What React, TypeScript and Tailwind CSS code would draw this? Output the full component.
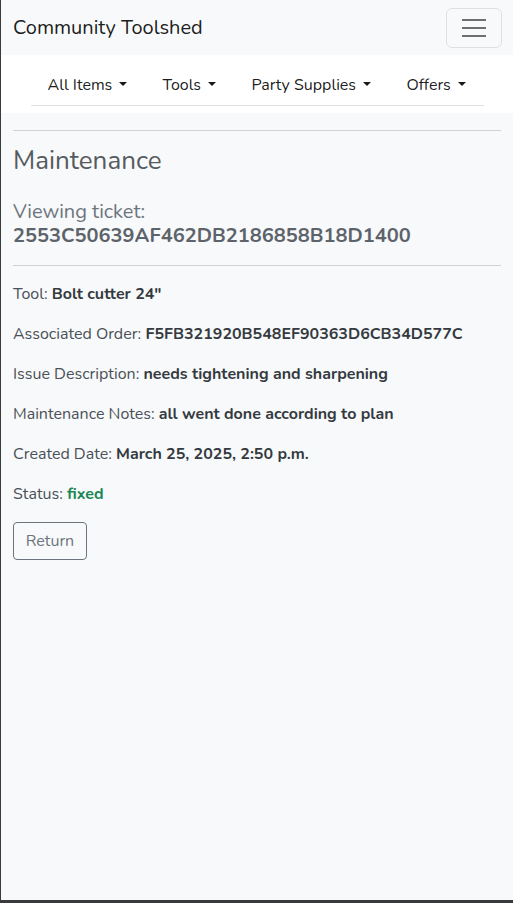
import React from "react";

const Caret = () => (
  <span className="ml-[7px] inline-block align-middle border-x-[4px] border-x-transparent border-t-[4.5px] border-t-black/90 h-0 w-0 relative top-[-2px]" />
);

export default function App() {
  const f = { fontFamily: "Nunito, Lato, 'Noto Sans', sans-serif" };
  return (
    <div className="min-h-[903px] w-[513px] bg-[#3a3a3a] flex flex-col" style={f}>
      <div className="flex-1 ml-[1px] mb-[3px] bg-[#f8f9fa] flex flex-col text-[#212529]">
        <nav className="h-[55px] bg-[#f8f9fa] flex items-center justify-between pl-[12px] pr-[11px]">
          <span className="text-[20px] text-black/90">Community Toolshed</span>
          <button className="w-[56px] h-[40px] border border-black/10 rounded-[6px] flex flex-col items-center justify-center gap-[6px]">
            <span className="block w-[24px] h-[2px] bg-[#6f6f6f]" />
            <span className="block w-[24px] h-[2px] bg-[#6f6f6f]" />
            <span className="block w-[24px] h-[2px] bg-[#6f6f6f]" />
          </button>
        </nav>
        <div className="bg-white h-[58px] flex justify-center">
          <ul className="w-[453px] h-[51px] border-b border-[#dee2e6] flex items-center text-[16px] text-black/90 pl-[17px] pt-[10px]">
            <li className="w-[115px]">All Items<Caret /></li>
            <li className="w-[89px]">Tools<Caret /></li>
            <li className="w-[155px]">Party Supplies<Caret /></li>
            <li>Offers<Caret /></li>
          </ul>
        </div>
        <main className="px-[12px] pt-[17px]">
          <hr className="border-t border-[#cfd1d3]" />
          <h2 className="text-[26px] leading-[31px] text-[#555b61] mt-[14px] mb-[24px]">Maintenance</h2>
          <h4 className="text-[20px] leading-[24px] text-[#6c757d]">
            Viewing ticket:
            <br />
            <b className="font-bold text-[#5c636a]">2553C50639AF462DB2186858B18D1400</b>
          </h4>
          <hr className="border-t border-[#cfd1d3] mt-[17px] mb-[16px]" />
          <div className="text-[16px] leading-[24px] text-[#495057] flex flex-col gap-[16px]">
            <p>Tool: <b className="font-bold text-[#343a40]">Bolt cutter 24"</b></p>
            <p>Associated Order: <b className="font-bold text-[#343a40]">F5FB321920B548EF90363D6CB34D577C</b></p>
            <p>Issue Description: <b className="font-bold text-[#343a40]">needs tightening and sharpening</b></p>
            <p>Maintenance Notes: <b className="font-bold text-[#343a40]">all went done according to plan</b></p>
            <p>Created Date: <b className="font-bold text-[#343a40]">March 25, 2025, 2:50 p.m.</b></p>
            <p>Status: <b className="font-bold text-[#198754]">fixed</b></p>
          </div>
          <button className="mt-[16px] w-[74px] h-[38px] border border-[#6c757d] rounded-[4px] text-[#6c757d] text-[16px]">
            Return
          </button>
        </main>
      </div>
    </div>
  );
}
